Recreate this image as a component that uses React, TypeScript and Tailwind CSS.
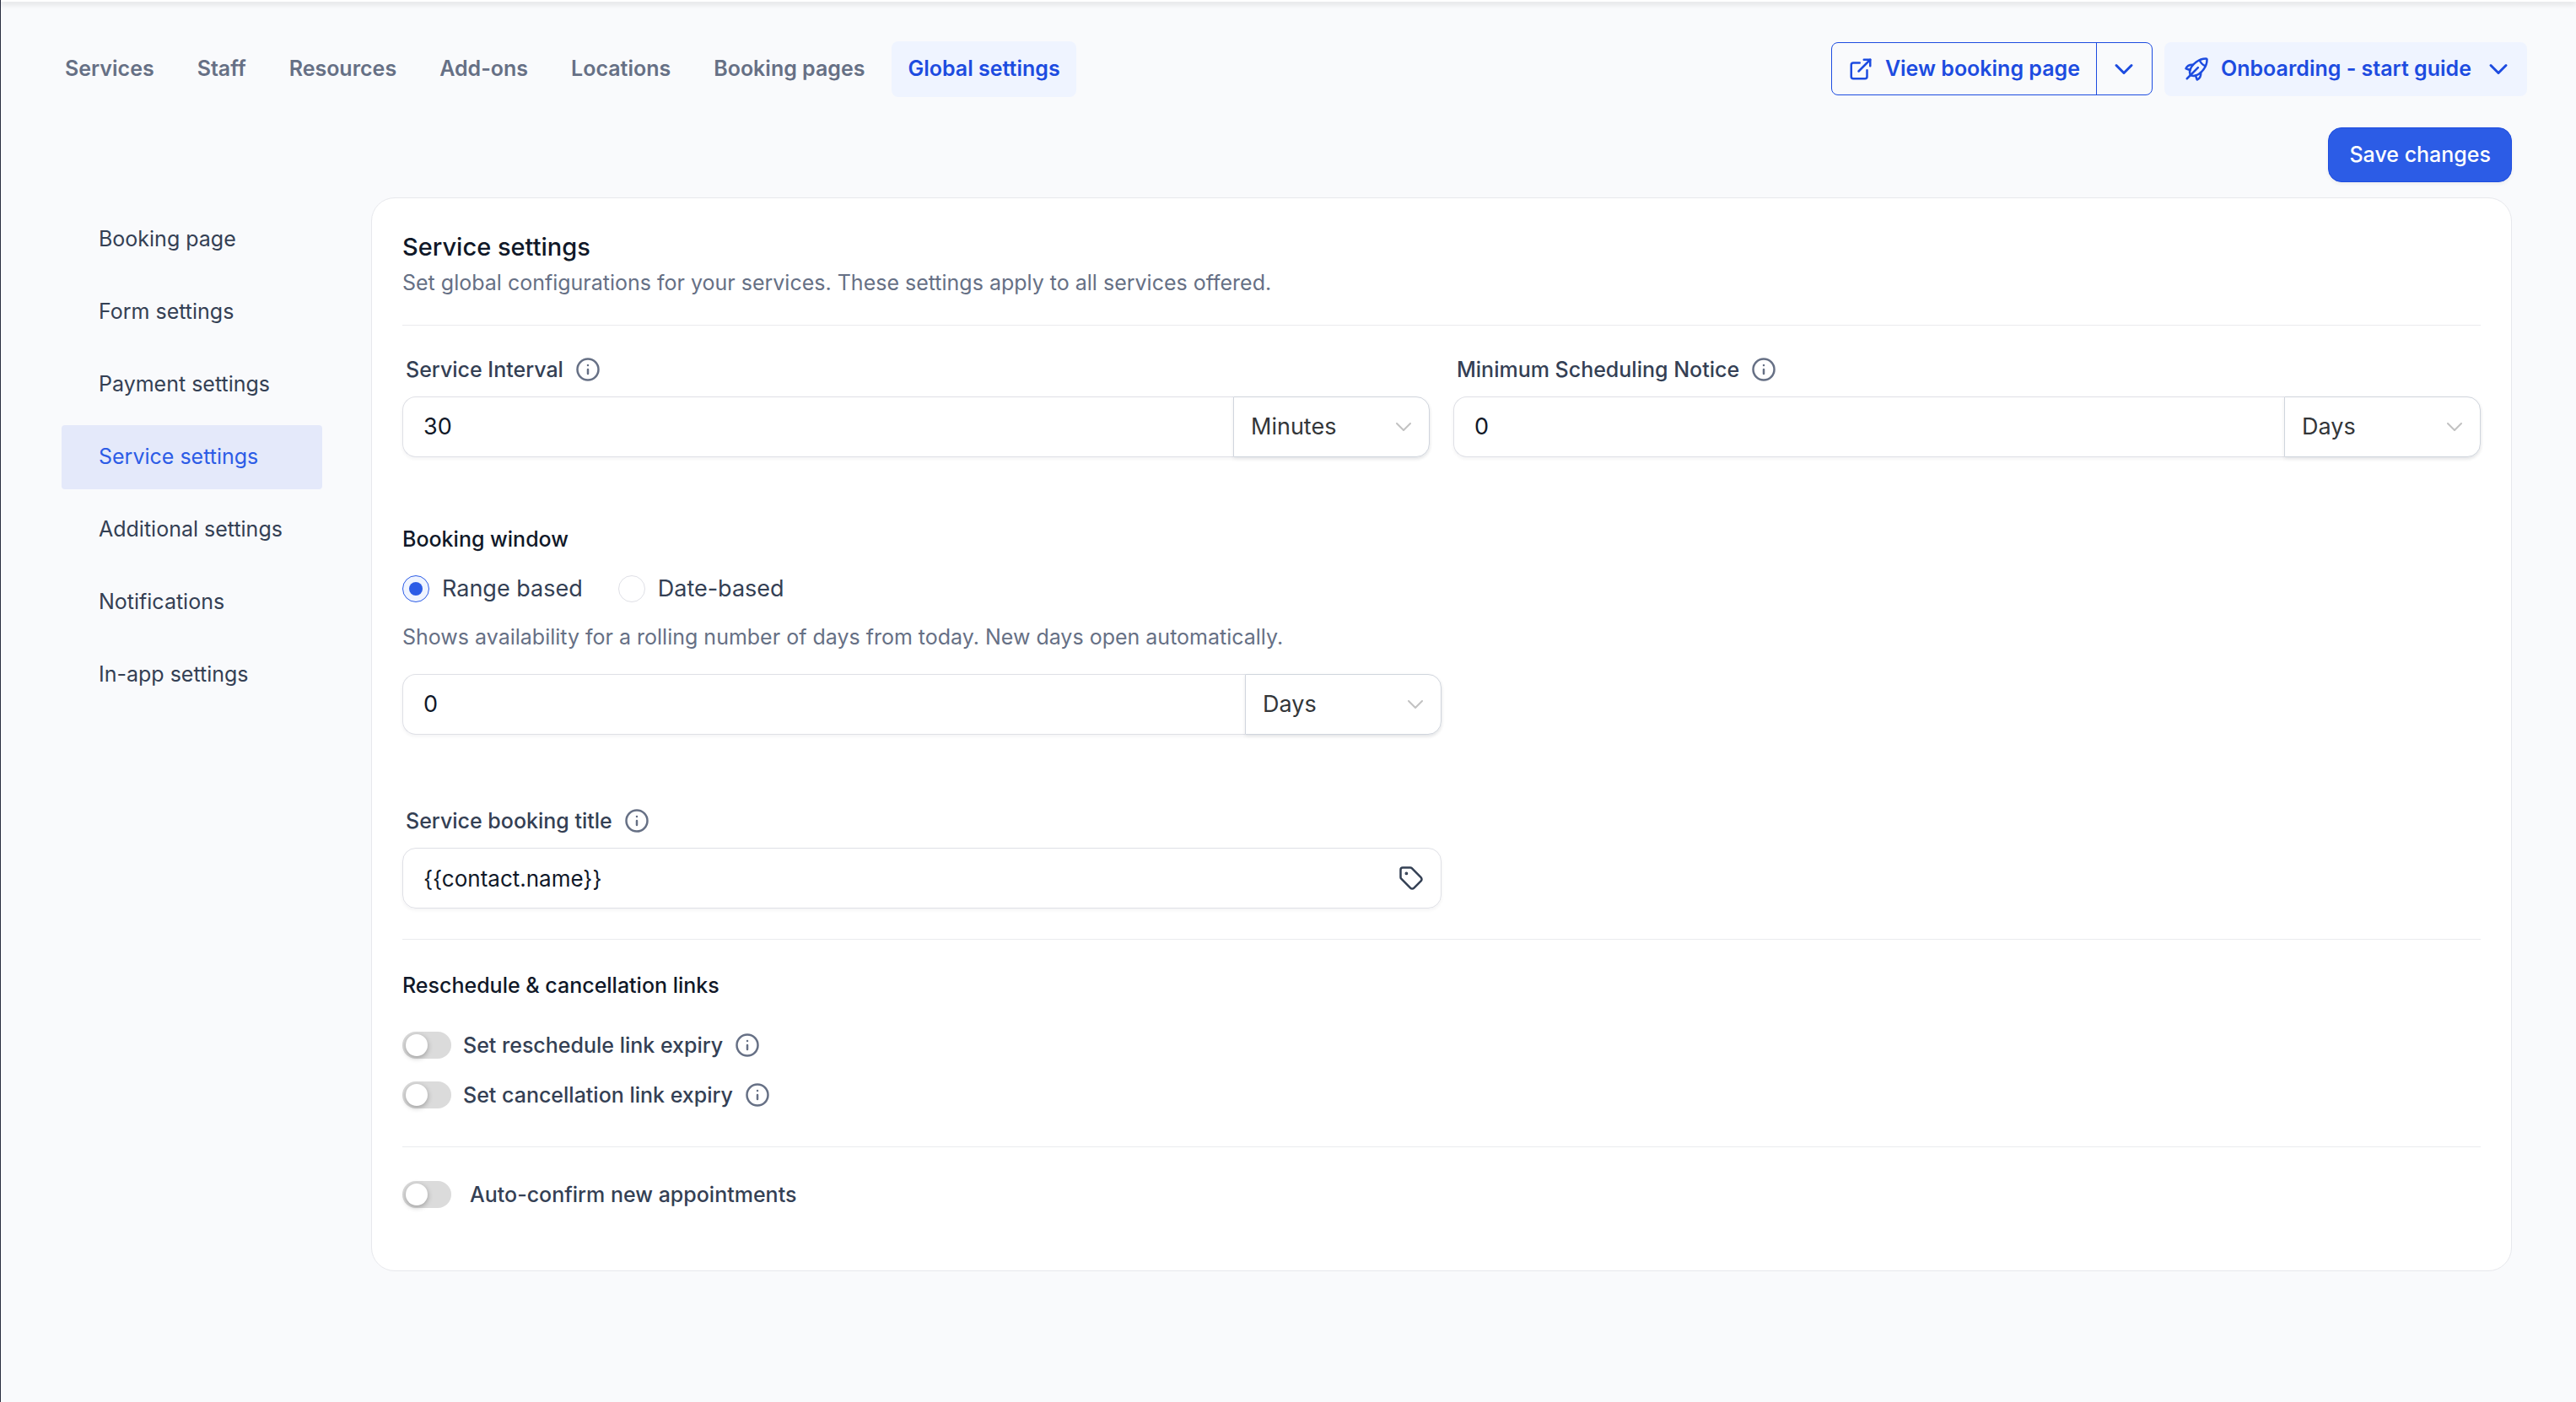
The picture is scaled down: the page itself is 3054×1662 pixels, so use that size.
import React, { useState } from 'react';
import { ChevronDown, ExternalLink, Info, Tag } from 'lucide-react';

const tabs = ['Services', 'Staff', 'Resources', 'Add-ons', 'Locations', 'Booking pages', 'Global settings'];

const sections = [
  'Booking page',
  'Form settings',
  'Payment settings',
  'Service settings',
  'Additional settings',
  'Notifications',
  'In-app settings',
];

const InfoIcon: React.FC = () => <Info className="size-[30px] shrink-0 text-[#667085]" strokeWidth={2} />;

const RocketIcon: React.FC = () => (
  <svg
    viewBox="0 0 24 24"
    className="size-[30px]"
    fill="none"
    stroke="currentColor"
    strokeWidth="2"
    strokeLinecap="round"
    strokeLinejoin="round"
  >
    <path d="M6.2 17.8L5.6 14.6C6 11.5 8.5 7.6 11.8 5.2C14.6 3.1 18 2 21 2C21.6 2 22 2.4 22 3C22 6 20.9 9.4 18.8 12.2C16.4 15.5 12.5 18 9.4 18.4L6.2 17.8Z" />
    <path d="M15 3.5C16 6 18 8 20.5 9" />
    <path d="M13.5 10.5L3 21" />
    <path d="M8.8 7.8C5.5 7.6 3.2 8.6 2 11.4L5.8 12.8" />
    <path d="M16.2 15.2C16.4 18.5 15.4 20.8 12.6 22L11.2 18.2" />
  </svg>
);

const Divider: React.FC = () => <hr className="border-t border-[#eaebee]" />;

type AmountProps = {
  id: string;
  label: string;
  initial: string;
  unit: string;
};

// Number box joined to its unit drop-down
const Amount: React.FC<AmountProps> = ({ id, label, initial, unit }) => {
  const [value, setValue] = useState(initial);
  const [selected, setSelected] = useState(unit);

  return (
    <div className="flex h-[72px] rounded-2xl shadow-[0_2px_4px_rgba(16,24,40,0.05)]">
      <input
        id={id}
        type="text"
        aria-label={label}
        value={value}
        onChange={(e) => setValue(e.target.value)}
        className="min-w-0 flex-1 rounded-l-2xl border border-r-0 border-[#dfe0e6] bg-white px-6 text-[27px] text-[#101828] outline-none"
      />
      <div className="relative w-[233px]">
        <select
          aria-label={label + ' unit'}
          value={selected}
          onChange={(e) => setSelected(e.target.value)}
          className="h-full w-full appearance-none rounded-r-2xl border border-[#d0d5dd] bg-white pr-16 pl-5 text-[27px] text-[#333639] shadow-[0_2px_4px_rgba(16,24,40,0.08)] outline-none"
        >
          <option>Minutes</option>
          <option>Hours</option>
          <option>Days</option>
        </select>
        <svg viewBox="0 0 18 10" className="pointer-events-none absolute top-[31px] right-[22px] h-[10px] w-[18px]" fill="none">
          <path d="M1 1l8 8 8-8" stroke="#c2c2c2" strokeWidth="2" strokeLinecap="round" strokeLinejoin="round" />
        </svg>
      </div>
    </div>
  );
};

const Switch: React.FC<{ id: string }> = ({ id }) => {
  const [on, setOn] = useState(false);

  return (
    <input
      id={id}
      type="checkbox"
      role="switch"
      checked={on}
      onChange={() => setOn(!on)}
      className="flex h-8 w-[58px] shrink-0 appearance-none items-center rounded-full bg-[#dbdbdb] px-1 before:size-[26px] before:rounded-full before:bg-white before:shadow-[0_2px_6px_rgba(0,0,0,0.3)] checked:justify-end checked:bg-[#2c5ce6]"
    />
  );
};

const Radio: React.FC<{ id: string; checked: boolean; onChange: () => void }> = ({ id, checked, onChange }) => (
  <input
    id={id}
    type="radio"
    name="window"
    checked={checked}
    onChange={onChange}
    className="flex size-8 shrink-0 appearance-none items-center justify-center rounded-full border border-[#dfe0e6] bg-white before:size-4 before:rounded-full checked:border-[#2c5ce6] checked:bg-[#eff4ff] checked:before:bg-[#2c5ce6]"
  />
);

const App: React.FC = () => {
  const [mode, setMode] = useState('range');
  const [title, setTitle] = useState('{{contact.name}}');

  return (
    <div className="min-h-screen border-l border-[#2b2f42] bg-[#f9fafc] font-['Inter',sans-serif]">
      <div className="h-[2px] bg-white shadow-[0_2px_6px_rgba(0,0,0,0.25)]"></div>

      {/* Header */}
      <header className="flex items-start justify-between pt-[47px] pr-[58px] pl-[57px]">
        <nav className="flex gap-[13px]">
          {tabs.map((tab) => (
            <a
              key={tab}
              href="#"
              className={
                tab === 'Global settings'
                  ? 'flex h-[66px] items-center rounded-lg bg-[#eff4ff] px-[19px] pb-px text-[25px] font-semibold text-[#1d4ce0]'
                  : 'flex h-[66px] items-center rounded-lg px-[19px] pb-px text-[25px] font-semibold text-[#667085]'
              }
            >
              {tab}
            </a>
          ))}
        </nav>

        <div className="flex gap-[14px] pt-px text-[25px] font-semibold text-[#1d4ce0]">
          <div className="flex h-[63px] rounded-lg border border-[#1d4ce0]">
            <button className="flex items-center gap-[14px] px-[19px]">
              <ExternalLink className="size-[30px]" strokeWidth={2} />
              View booking page
            </button>
            <button aria-label="More booking page links" className="flex w-[66px] items-center justify-center border-l border-[#1d4ce0]">
              <ChevronDown className="size-9" strokeWidth={2} />
            </button>
          </div>
          <button className="flex h-16 items-center gap-[14px] rounded-lg bg-[#eff4ff] pr-4 pl-[23px]">
            <RocketIcon />
            Onboarding - start guide
            <ChevronDown className="size-9" strokeWidth={2} />
          </button>
        </div>
      </header>

      <div className="mt-9 flex justify-end pr-[76px]">
        <button className="h-[65px] rounded-2xl border border-[#1d4ce0] bg-[#2c5ce6] px-6 text-[25px] font-medium text-white shadow-[0_2px_4px_rgba(16,24,40,0.06)]">
          Save changes
        </button>
      </div>

      <div className="mt-[18px] flex items-start gap-[58px] pr-[76px] pb-20 pl-[72px]">
        {/* Sections */}
        <aside className="flex w-[309px] shrink-0 flex-col gap-[10px] pt-3">
          {sections.map((section) => (
            <a
              key={section}
              href="#"
              className={
                section === 'Service settings'
                  ? 'flex h-[76px] items-center rounded bg-[#e4e9fa] pl-11 text-[25px] text-[#2c5ce6]'
                  : 'flex h-[76px] items-center rounded pl-11 text-[25px] text-[#344054]'
              }
            >
              {section}
            </a>
          ))}
        </aside>

        <main className="min-w-0 flex-1 rounded-[28px] border border-[#e7e8ec] bg-white px-9 pt-[38px] pb-[72px]">
          <h1 className="text-[29px] leading-[40px] font-medium text-[#101828]">Service settings</h1>
          <p className="mt-1 mb-8 text-[25px] leading-[36px] text-[#667085]">
            Set global configurations for your services. These settings apply to all services offered.
          </p>
          <Divider />

          <div className="mt-[34px] grid grid-cols-2 gap-7">
            <div>
              <div className="mb-[14px] flex items-center gap-[14px] pl-1">
                <label htmlFor="interval" className="text-[25px] leading-[36px] font-medium text-[#344054]">
                  Service Interval
                </label>
                <InfoIcon />
              </div>
              <Amount id="interval" label="Service Interval" initial="30" unit="Minutes" />
            </div>
            <div>
              <div className="mb-[14px] flex items-center gap-[14px] pl-1">
                <label htmlFor="notice" className="text-[25px] leading-[36px] font-medium text-[#344054]">
                  Minimum Scheduling Notice
                </label>
                <InfoIcon />
              </div>
              <Amount id="notice" label="Minimum Scheduling Notice" initial="0" unit="Days" />
            </div>
          </div>

          <h2 className="mt-[79px] text-[25px] leading-[36px] font-medium text-[#101828]">Booking window</h2>
          <div className="mt-[21px] flex gap-[42px] text-[27px] leading-[40px] text-[#344054]">
            <div className="flex items-center gap-[15px]">
              <Radio id="range" checked={mode === 'range'} onChange={() => setMode('range')} />
              <label htmlFor="range">Range based</label>
            </div>
            <div className="flex items-center gap-[15px]">
              <Radio id="date" checked={mode === 'date'} onChange={() => setMode('date')} />
              <label htmlFor="date">Date-based</label>
            </div>
          </div>
          <p className="mt-[19px] mb-[26px] text-[25px] leading-[36px] text-[#667085]">
            Shows availability for a rolling number of days from today. New days open automatically.
          </p>

          <div className="w-1/2">
            <Amount id="window" label="Booking window" initial="0" unit="Days" />

            <div className="mt-[84px] mb-[14px] flex items-center gap-[14px] pl-1">
              <label htmlFor="title" className="text-[25px] leading-[36px] font-medium text-[#344054]">
                Service booking title
              </label>
              <InfoIcon />
            </div>
            <div className="flex h-[72px] items-center rounded-2xl border border-[#dfe0e6] pr-5 shadow-[0_2px_4px_rgba(16,24,40,0.05)]">
              <input
                id="title"
                type="text"
                value={title}
                onChange={(e) => setTitle(e.target.value)}
                className="min-w-0 flex-1 bg-transparent px-6 text-[26px] text-[#101828] outline-none"
              />
              <button aria-label="Insert a custom value">
                <Tag className="size-[30px] text-[#344054]" strokeWidth={2} />
              </button>
            </div>
          </div>

          <div className="my-9">
            <Divider />
          </div>

          <h2 className="text-[25px] leading-[36px] font-medium text-[#101828]">Reschedule &amp; cancellation links</h2>
          <div className="mt-[35px] mb-[43px] flex flex-col gap-[23px] text-[25px] leading-[36px] font-medium text-[#344054]">
            <div className="flex items-center gap-[14px]">
              <Switch id="reschedule" />
              <label htmlFor="reschedule">Set reschedule link expiry</label>
              <InfoIcon />
            </div>
            <div className="flex items-center gap-[14px]">
              <Switch id="cancellation" />
              <label htmlFor="cancellation">Set cancellation link expiry</label>
              <InfoIcon />
            </div>
          </div>
          <Divider />

          <div className="mt-[38px] flex items-center gap-[22px] text-[25px] leading-[36px] font-medium text-[#344054]">
            <Switch id="confirm" />
            <label htmlFor="confirm">Auto-confirm new appointments</label>
          </div>
        </main>
      </div>
    </div>
  );
};

export default App;
